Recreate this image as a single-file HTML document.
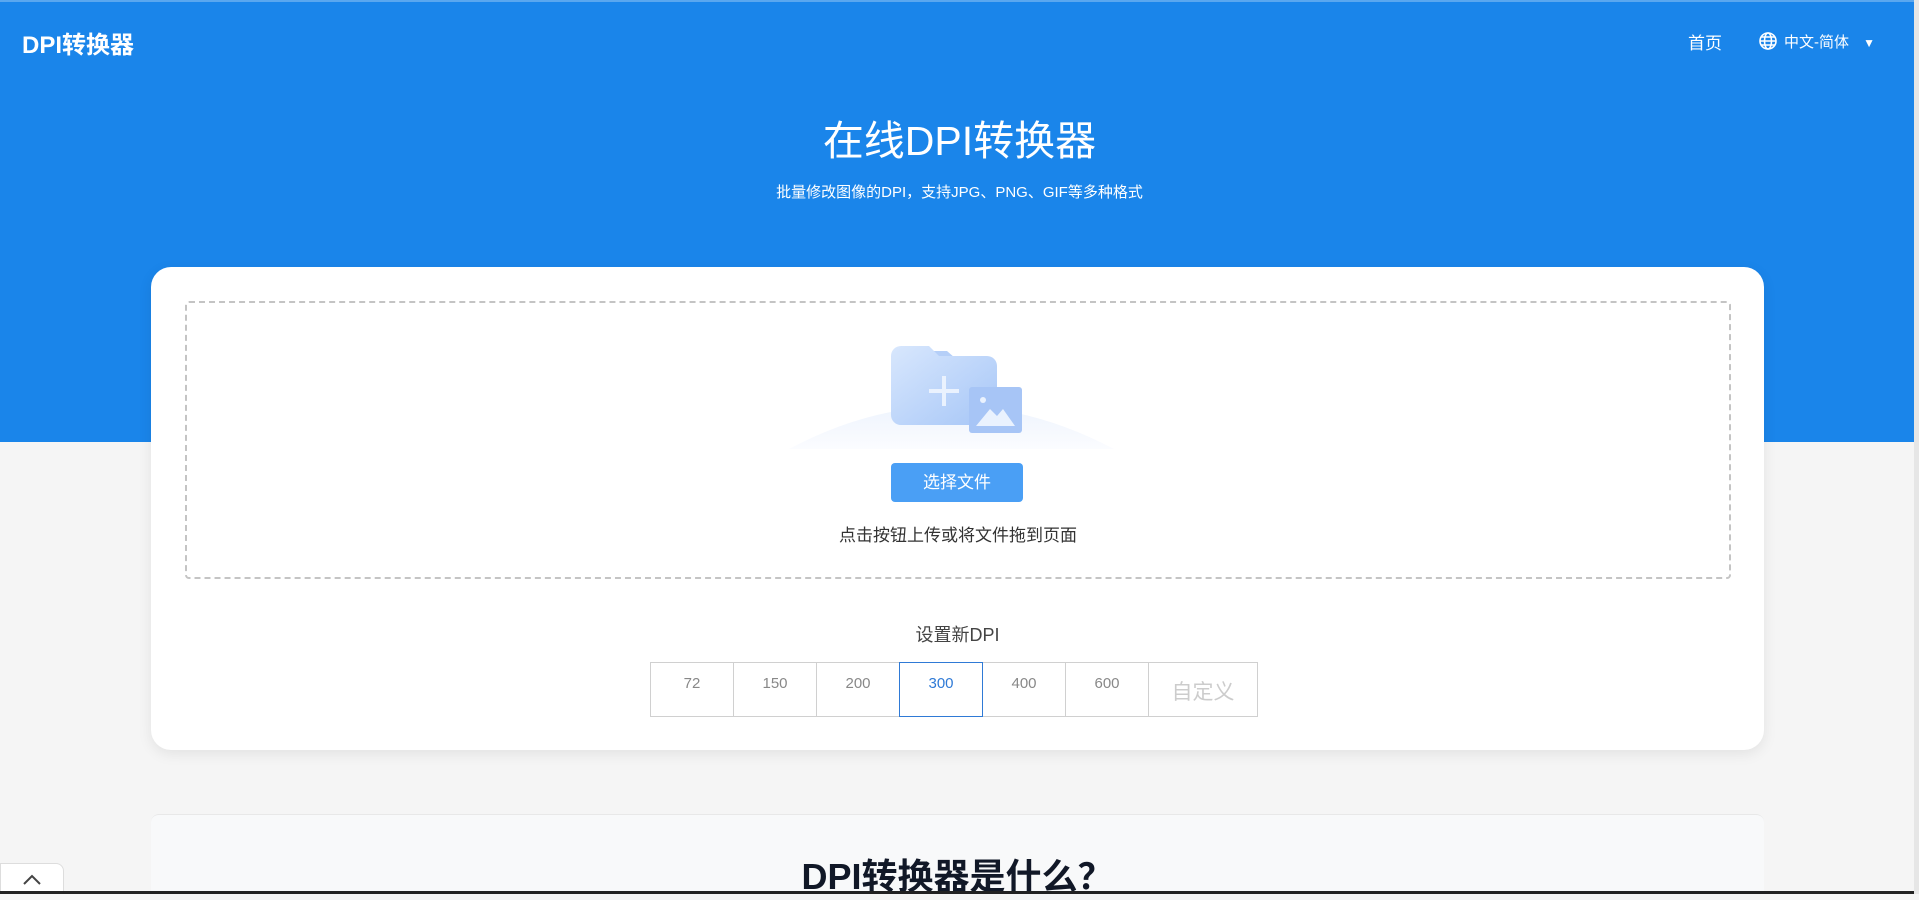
<!DOCTYPE html>
<html><head><meta charset="utf-8"><style>
*{margin:0;padding:0;box-sizing:border-box}
body{width:1919px;height:894px;overflow:hidden;background:#f5f5f5;font-family:"Liberation Sans","Noto Sans CJK SC",sans-serif;position:relative}
.hdr{position:absolute;left:0;top:0;width:1919px;height:442px;background:#1a85ea;border-top:2px solid #5aa7ef}
.logo{position:absolute;left:22px;top:23px;color:#fff;font-weight:bold;font-size:24px}
.nav{position:absolute;top:27px;color:#fff;font-size:17px}
.title{position:absolute;left:0;width:1919px;top:105px;text-align:center;color:#fff;font-size:41px}
.sub{position:absolute;left:0;width:1919px;top:179px;text-align:center;color:#fff;font-size:15px}
.card{position:absolute;left:151px;top:267px;width:1613px;height:483px;background:#fff;border-radius:20px;box-shadow:0 4px 14px rgba(0,0,0,.08)}
.drop{position:absolute;left:34px;top:34px;width:1546px;height:278px;border:2px dashed #c4c4c4;border-radius:4px}
.btn{position:absolute;left:704px;top:160px;width:132px;height:39px;background:#4a9ff5;border-radius:4px;color:#fff;font-size:17px;text-align:center;line-height:39px}
.hint{position:absolute;left:0;width:100%;top:218px;text-align:center;color:#333;font-size:17px}
.lab{position:absolute;left:0;width:100%;top:354px;text-align:center;color:#444;font-size:18px}
.opts{position:absolute;left:500px;top:395px;display:flex}
.opts div{width:84px;height:55px;border:1px solid #d0d0d0;margin-left:-1px;text-align:center;line-height:42px;color:#888;font-size:15px;background:#fff}
.opts div.a{border-color:#2f7ad6;color:#2f7ad6;position:relative;z-index:1}
.opts div.c{width:110px;color:#ccc;font-size:21px;line-height:60px}
.sec{position:absolute;left:151px;top:814px;width:1613px;height:80px;background:#f8f9fa;border-radius:8px 8px 0 0;border-top:1px solid #e8e8e8}
.sec h2{text-align:center;margin-top:33px;font-size:36px;color:#111827;font-weight:bold}
.top{position:absolute;left:0;top:863px;width:64px;height:31px;background:#fff;border:1px solid #ddd;border-radius:0 8px 0 0}
</style></head><body>
<div class="hdr">
<div class="logo">DPI转换器</div>
<div class="nav" style="left:1688px">首页</div>
<div class="nav" style="left:1758px;font-size:15px;top:29px">
<svg width="20" height="20" viewBox="0 0 20 20" style="vertical-align:-4px;margin-right:6px"><g fill="none" stroke="#fff" stroke-width="1.6"><circle cx="10" cy="10" r="8"/><ellipse cx="10" cy="10" rx="3.5" ry="8"/><path d="M2 10h16M3.5 6h13M3.5 14h13"/></g></svg>中文-简体 <span style="font-size:12px;margin-left:10px">▼</span></div>
<div class="title">在线DPI转换器</div>
<div class="sub">批量修改图像的DPI，支持JPG、PNG、GIF等多种格式</div>
</div>
<div class="card">
<div class="drop">
<svg style="position:absolute;left:0;top:0" width="1542" height="160" viewBox="0 0 1542 160">
<defs><linearGradient id="g" x1="0" y1="0" x2="1" y2="1"><stop offset="0" stop-color="#d8e7fd"/><stop offset="1" stop-color="#a6c6f7"/></linearGradient>
<linearGradient id="h" x1="0" y1="0" x2="0" y2="1"><stop offset="0" stop-color="#eef4fd"/><stop offset="1" stop-color="#fbfcff"/></linearGradient></defs>
<path d="M602 146 Q764 60 927 146 z" fill="url(#h)"/>
<path d="M740 48h20l8 7h32a10 10 0 0 1 10 10v40h-70z" fill="#b5cff8"/>
<path d="M714 43h28l10 10h48a10 10 0 0 1 10 10v49a10 10 0 0 1-10 10h-86a10 10 0 0 1-10-10V53a10 10 0 0 1 10-10z" fill="url(#g)"/>
<path d="M757 73v30M742 88h30" stroke="#eaf2fe" stroke-width="4"/>
<rect x="782" y="84" width="53" height="46" rx="3" fill="#a7c5f6"/>
<circle cx="796" cy="97" r="3" fill="#eaf2fe"/>
<path d="M789 123l14-17 7 7 6-7 12 17z" fill="#eaf2fe"/>
</svg>
<div class="btn">选择文件</div>
<div class="hint">点击按钮上传或将文件拖到页面</div>
</div>
<div class="lab">设置新DPI</div>
<div class="opts"><div>72</div><div>150</div><div>200</div><div class="a">300</div><div>400</div><div>600</div><div class="c">自定义</div></div>
</div>
<div class="sec"><h2>DPI转换器是什么？</h2></div>
<div class="top"><svg width="64" height="30" viewBox="0 0 64 30"><path d="M23 20l8-8 8 8" fill="none" stroke="#444" stroke-width="2"/></svg></div>
<div style="position:absolute;left:0;top:891px;width:1919px;height:3px;background:#222"></div>
<div style="position:absolute;left:1914px;top:0;width:5px;height:894px;background:#e6e6e6"></div>
</body></html>
